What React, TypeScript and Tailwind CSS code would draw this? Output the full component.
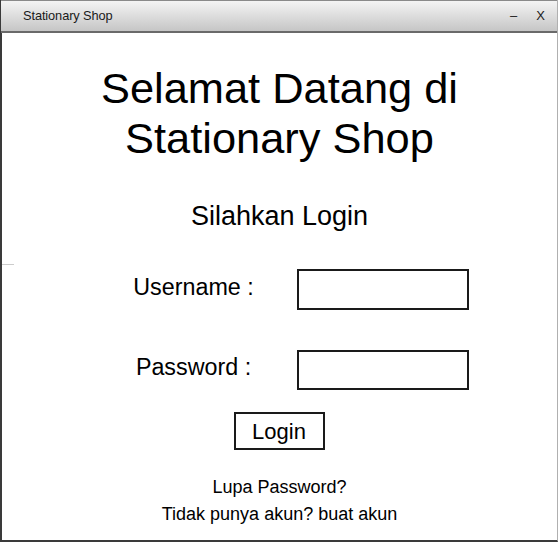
import React from "react";

export default function App() {
  const font = { fontFamily: '"Liberation Sans", Arial, sans-serif' };
  return (
    <div className="w-[558px] h-[542px] bg-white relative overflow-hidden text-black" style={font}>
      <div className="h-full flex flex-col border-l-2 border-l-[#3a3a3a] border-b-2 border-b-[#3a3a3a] border-r border-r-[#b0b0b0]">
        <div className="h-[33px] shrink-0 flex items-center border-t border-t-[#8a8a8a] border-b-2 border-b-[#6a6a6a] bg-gradient-to-b from-[#f4f4f4] to-[#c6c6c6] -ml-[1px] pl-[22px] pr-[12px]">
          <span className="text-[12.8px] text-[#1a1a1a] tracking-[-0.1px]">Stationary Shop</span>
          <span className="ml-auto text-[13px] text-[#1a1a1a]">–</span>
          <span className="ml-[19px] text-[13px] text-[#1a1a1a]">X</span>
        </div>
        <div className="flex flex-col items-center flex-1 relative">
          <div className="absolute left-0 top-[231px] w-[12px] h-[1px] bg-[#cccccc]"></div>
          <h1 className="mt-[30px] text-[43.4px] leading-[50px] text-center">
            Selamat Datang di
            <br />
            Stationary Shop
          </h1>
          <div className="mt-[37px] text-[27px] leading-[32px]">Silahkan Login</div>
          <div className="self-stretch flex flex-col mt-[37px] pl-[118px] gap-[40px]">
            <div className="flex items-center">
              <div className="w-[147px] text-center text-[23.3px] pb-[4px]">Username :</div>
              <div className="ml-[30px] w-[172px] h-[41px] border-2 border-[#1a1a1a]"></div>
            </div>
            <div className="flex items-center">
              <div className="w-[147px] text-center text-[23.3px] pb-[5px]">Password :</div>
              <div className="ml-[30px] w-[172px] h-[40px] border-2 border-[#1a1a1a]"></div>
            </div>
          </div>
          <div className="mt-[22px] w-[91px] h-[38px] border-2 border-[#1a1a1a] flex items-center justify-center text-[22px] -ml-[1px]">
            Login
          </div>
          <div className="mt-[24px] text-[18px] leading-[26px]">Lupa Password?</div>
          <div className="text-[18px] leading-[28px]">Tidak punya akun? buat akun</div>
        </div>
      </div>
    </div>
  );
}
